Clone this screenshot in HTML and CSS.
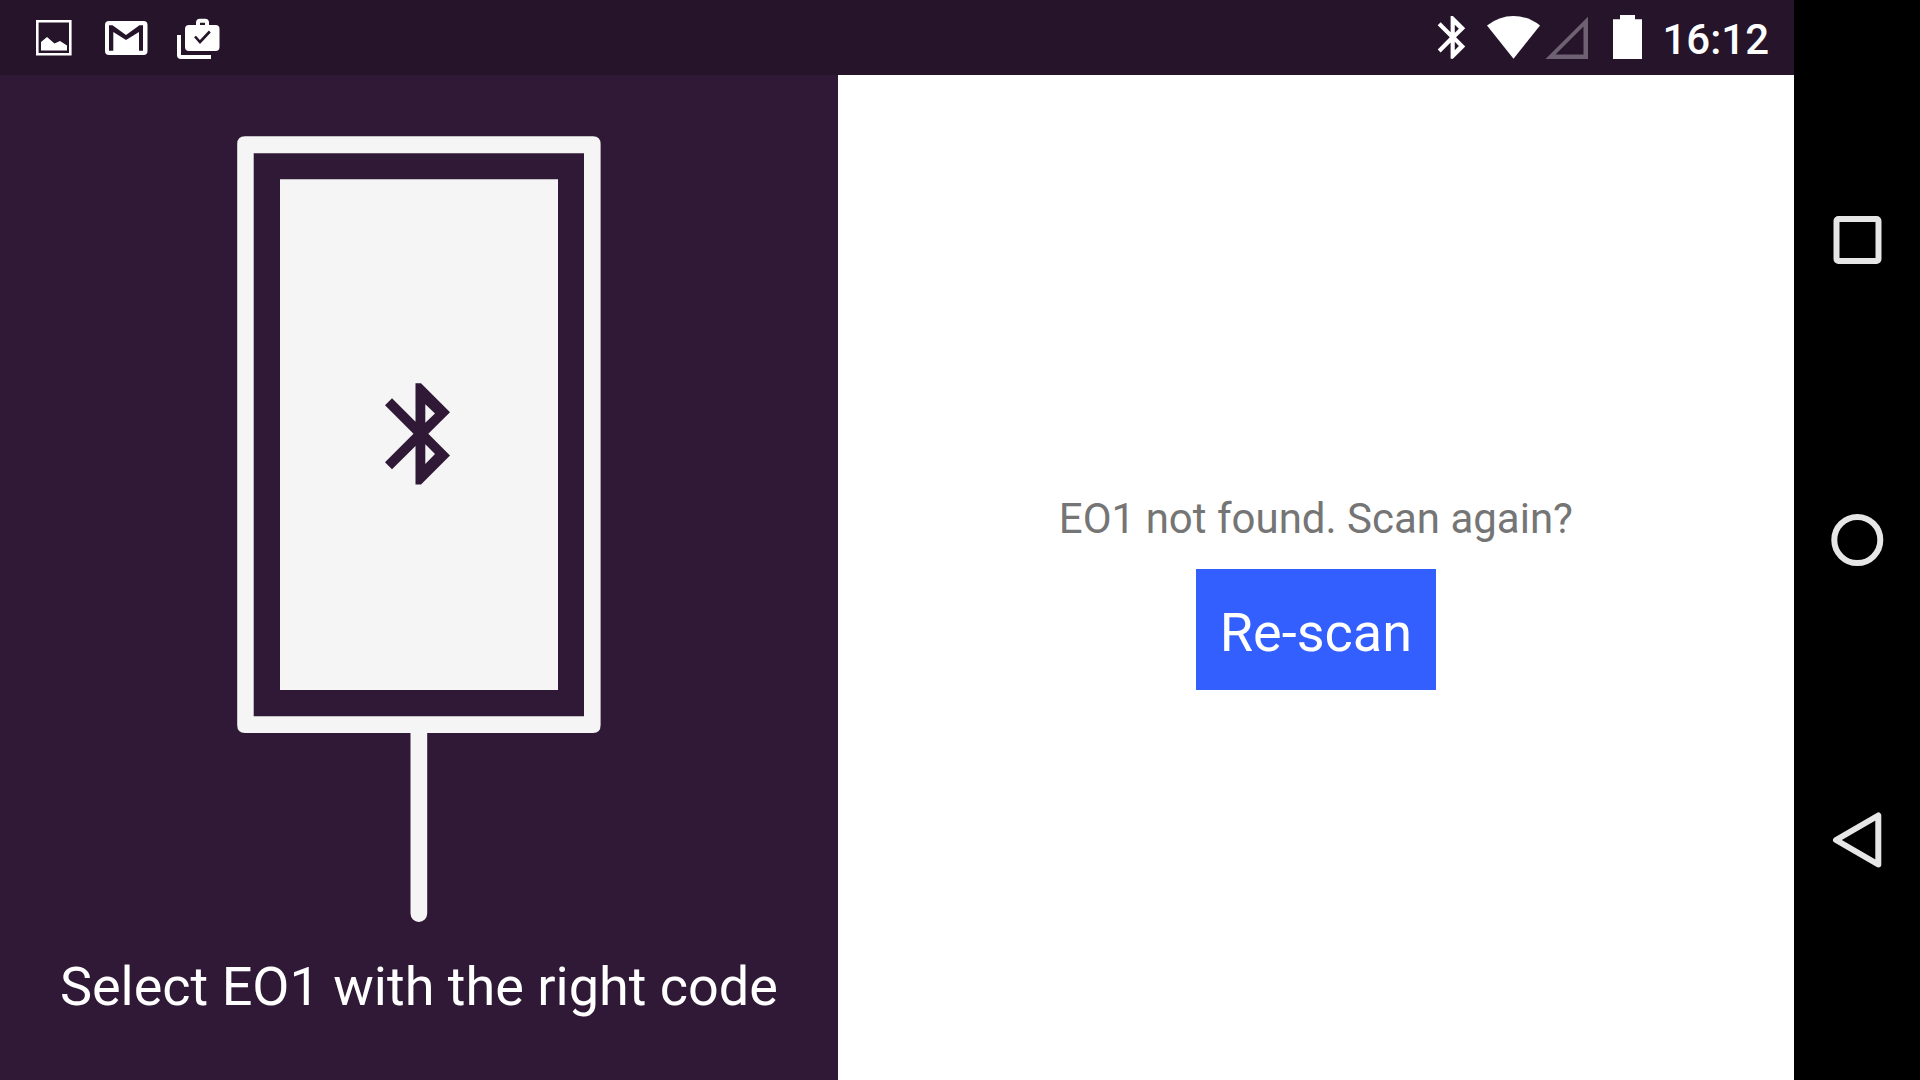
FILE: index.html
```html
<!DOCTYPE html>
<html lang="en">
<head>
<meta charset="utf-8">
<meta name="viewport" content="width=device-width, initial-scale=1">
<title>Select EO1</title>
<link rel="stylesheet" href="styles.css">
</head>
<body>
<div class="device">
  <div class="app">
    <header class="status">
      <div class="status-group notifications">
        <svg class="icon" width="44" height="45" viewBox="32 15 44 45" role="img" aria-label="Screenshot captured">
          <path fill="#fff" fill-rule="evenodd" d="M36 20H71.600V55.600H36ZM38.600 22.600V53H69V22.600Z"/>
          <path fill="#fff" d="M41 50.500V42L47 37L54.500 43.500L60 41L67 45.500V50.500Z"/>
        </svg>
        <svg class="icon" width="44" height="45" viewBox="104 15 44 45" role="img" aria-label="New mail">
          <rect x="105" y="21" width="42.500" height="34" rx="4" fill="#fff"/>
          <path fill="#26142b" d="M109 25.300H112.500L126 35L139.500 25.300H143V50.700H139V32L126 40L113.300 32V50.700H109Z"/>
        </svg>
        <svg class="icon" width="44" height="45" viewBox="176 15 44 45" role="img" aria-label="Work apps updated">
          <path fill="#fff" d="M177 35H181V55H211V59H181Q177 59 177 55Z"/>
          <path fill="#fff" fill-rule="evenodd" d="M189 25H196V22.500Q196 18.700 200 18.700H205Q209 18.700 209 22.500V25H215.500Q219.500 25 219.500 29V47Q219.500 51 215.500 51H189Q185 51 185 47V29Q185 25 189 25ZM200 25H205V22.700H200Z"/>
          <path fill="none" stroke="#26142b" stroke-width="2.600" d="M195 36.500L200 42L209.800 31.500"/>
        </svg>
      </div>
      <div class="status-group">
        <svg class="icon" width="30" height="45" viewBox="144 245 70.800 106.200" role="img" aria-label="Bluetooth on">
          <path fill="#fff" fill-rule="evenodd" d="M178.500 247.300H184L213 276.300L191.300 297.800L213 319.600L184 348.500H178.500V310L155 333.300L148 326.300L176.500 297.800L148 269.300L155 262.300L178.500 285.700ZM188.300 268.300V286.800L198 277.600ZM188.300 308.300V328L198 318Z"/>
        </svg>
        <div class="network">
          <svg class="icon" width="54" height="45" viewBox="1486 15 54 45" role="img" aria-label="Wi-Fi connected">
            <path fill="#fff" d="M1487 25.500Q1499 16 1513.500 16T1540 25.500L1513.500 58.700Z"/>
          </svg>
          <svg class="icon" width="48" height="45" viewBox="1544 15 48 45" role="img" aria-label="No mobile signal">
            <path fill="#6e6172" fill-rule="evenodd" d="M1545.500 59L1588 16.700V59ZM1555.500 54.500H1583.500V26.500Z"/>
          </svg>
        </div>
        <svg class="icon" width="30" height="45" viewBox="1612 15 30 45" role="img" aria-label="Battery full">
          <path fill="#fff" d="M1613 19.200H1620V15H1635V19.200H1642V59H1613Z"/>
        </svg>
        <time class="clock" datetime="16:12">16:12</time>
      </div>
    </header>
    <main class="panes">
      <section class="guide">
        <svg class="illustration" viewBox="0 0 364 786" role="img" aria-label="EO1 display on a stand with a Bluetooth symbol">
          <path fill="#f5f5f5" fill-rule="evenodd" d="M8 0.200H356Q363.600 0.200 363.600 8V589.300Q363.600 597 356 597H8Q0.200 597 0.200 589.300V8Q0.200 0.200 8 0.200ZM16.700 17.200V580.300H347V17.200Z"/>
          <path fill="#f5f5f5" d="M43 43.300H321V554H43ZM173.500 595H190.200V777.600A8.350 8.350 0 0 1 173.500 777.600Z"/>
          <path fill="#301936" fill-rule="evenodd" d="M178.500 247.300H184L213 276.300L191.300 297.800L213 319.600L184 348.500H178.500V310L155 333.300L148 326.300L176.500 297.800L148 269.300L155 262.300L178.500 285.700ZM188.300 268.300V286.800L198 277.600ZM188.300 308.300V328L198 318Z"/>
        </svg>
        <p class="caption">Select EO1 with the right code</p>
      </section>
      <section class="result">
        <p class="message">EO1 not found. Scan again?</p>
        <button class="rescan" type="button">Re-scan</button>
      </section>
    </main>
  </div>
  <nav class="system-nav" aria-label="System navigation">
    <button class="nav-button" type="button" aria-label="Recent apps">
      <svg class="icon" width="60" height="60" viewBox="0 0 60 60"><rect x="9.500" y="9" width="42" height="42" rx="2" fill="none" stroke="#e6e6e6" stroke-width="6"/></svg>
    </button>
    <button class="nav-button" type="button" aria-label="Home">
      <svg class="icon" width="60" height="60" viewBox="0 0 60 60"><circle cx="30.300" cy="30" r="23" fill="none" stroke="#e6e6e6" stroke-width="6"/></svg>
    </button>
    <button class="nav-button" type="button" aria-label="Back">
      <svg class="icon" width="60" height="60" viewBox="0 0 60 60"><path d="M9 30L51.300 5.500V54.500Z" fill="none" stroke="#e6e6e6" stroke-width="6" stroke-linejoin="round"/></svg>
    </button>
  </nav>
</div>
</body>
</html>
```
FILE: styles.css
```css
* {
  box-sizing: border-box;
}

body {
  margin: 0;
  background: #fff;
  font-family: Roboto, "Liberation Sans", sans-serif;
}

p {
  margin: 0;
}

button {
  border: 0;
  font-family: inherit;
  cursor: pointer;
}

.device {
  display: flex;
  min-height: 100vh;
}

.app {
  flex: 1;
  display: flex;
  flex-direction: column;
}

.status {
  display: flex;
  justify-content: space-between;
  align-items: center;
  height: 75px;
  padding: 0 25px 0 32px;
  background: #26142b;
}

.status-group {
  display: flex;
  align-items: center;
  gap: 20px;
}

.notifications {
  gap: 28px;
}

.network {
  display: flex;
  gap: 4px;
}

.icon {
  display: block;
}

.clock {
  padding-top: 4px;
  color: #fff;
  font-size: 42px;
  font-weight: 500;
  line-height: 50px;
}

.panes {
  flex: 1;
  display: grid;
  grid-template-columns: 467fr 533fr;
}

.guide,
.result {
  display: flex;
  flex-direction: column;
  align-items: center;
  justify-content: center;
}

.guide {
  gap: 33px;
  background: #301936;
}

.illustration {
  display: block;
  width: 364px;
}

.caption {
  color: #fff;
  font-size: 54px;
  line-height: 64px;
}

.result {
  gap: 25px;
  padding-top: 29px;
  background: #fff;
}

.message {
  color: #757575;
  font-size: 42px;
  line-height: 50px;
}

.rescan {
  padding: 32px 24px 25px;
  background: #335fff;
  color: #fff;
  font-size: 54px;
  line-height: 64px;
}

.system-nav {
  display: flex;
  flex-direction: column;
  justify-content: center;
  width: 126px;
  background: #000;
}

.nav-button {
  display: flex;
  align-items: center;
  justify-content: center;
  height: 300px;
  padding: 0;
  background: transparent;
}
```
